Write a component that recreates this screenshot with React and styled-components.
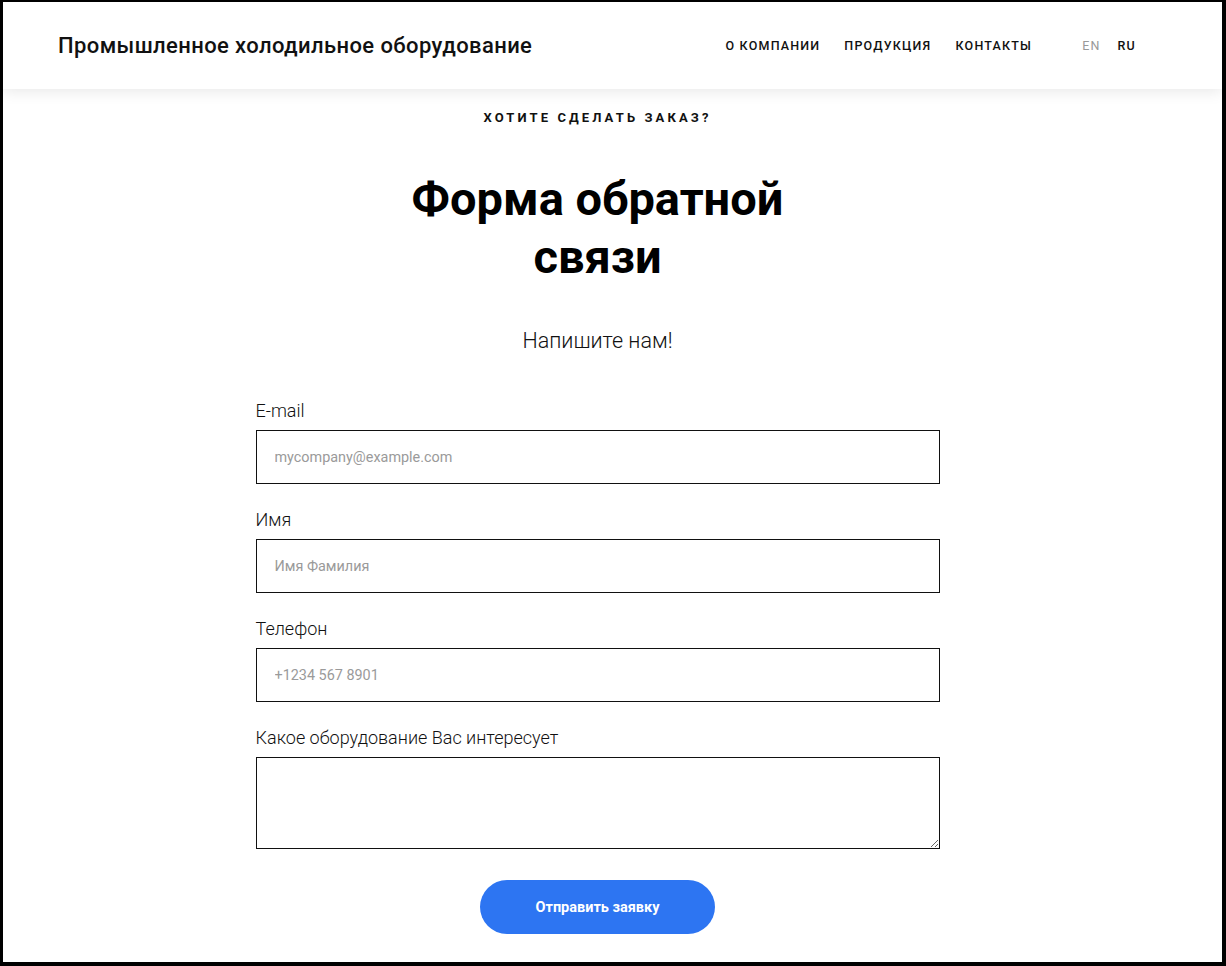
import React from "react";
import styled, { createGlobalStyle } from "styled-components";

const GlobalStyle = createGlobalStyle`
  * {
    box-sizing: border-box;
  }
  html, body {
    margin: 0;
    padding: 0;
    background: #fff;
  }
  body {
    font-family: Roboto, "Noto Sans", "Liberation Sans", sans-serif;
    color: #000;
  }
`;

const Frame = styled.div`
  width: 1226px;
  height: 966px;
  border-style: solid;
  border-color: #000;
  border-width: 2px 4px 4px 3px;
  overflow: hidden;
  background: #fff;
`;

const Header = styled.header`
  height: 87px;
  display: flex;
  align-items: center;
  justify-content: space-between;
  padding: 0 86px 0 55px;
  background: #fff;
  box-shadow: 0 3px 14px rgba(0, 0, 0, 0.09);
  position: relative;
  z-index: 1;
`;

const Brand = styled.div`
  font-size: 22px;
  font-weight: 500;
  color: #111;
  letter-spacing: 0.4px;
`;

const NavRow = styled.div`
  display: flex;
  align-items: center;
`;

const Nav = styled.nav`
  display: flex;
  gap: 24px;
  margin-right: 50px;
`;

const NavLink = styled.a`
  font-size: 12.5px;
  font-weight: 500;
  letter-spacing: 1.2px;
  text-transform: uppercase;
  color: #111;
  text-decoration: none;
`;

const Langs = styled.div`
  display: flex;
  gap: 17px;
`;

const Lang = styled.span`
  font-size: 12.5px;
  font-weight: ${(p) => (p.$active ? 500 : 400)};
  letter-spacing: 1.2px;
  color: ${(p) => (p.$active ? "#111" : "#999")};
`;

const Main = styled.main`
  display: flex;
  flex-direction: column;
  align-items: center;
  padding: 21px 30px 0 0;
`;

const Kicker = styled.div`
  font-size: 13px;
  line-height: 16px;
  font-weight: 700;
  letter-spacing: 3.1px;
  text-transform: uppercase;
  color: #111;
`;

const Title = styled.h1`
  margin: 44px 0 0;
  max-width: 420px;
  text-align: center;
  font-size: 47px;
  line-height: 57.5px;
  font-weight: 700;
  color: #000;
`;

const Subtitle = styled.p`
  margin: 44px 0 0;
  font-size: 21.5px;
  line-height: 24px;
  font-weight: 300;
  color: #111;
`;

const Form = styled.form`
  width: 684px;
  margin-top: 47px;
  display: flex;
  flex-direction: column;
`;

const Field = styled.div`
  display: flex;
  flex-direction: column;
  margin-bottom: 25px;
`;

const Label = styled.label`
  font-size: 18px;
  line-height: 21px;
  font-weight: 300;
  color: #111;
  margin-bottom: 9px;
`;

const Input = styled.input`
  width: 100%;
  height: 54px;
  border: 1px solid #111;
  border-radius: 0;
  padding: 0 18px;
  font-family: inherit;
  font-size: 14.4px;
  color: #111;
  outline: none;
  &::placeholder {
    color: #9a9a9a;
  }
`;

const TextArea = styled.textarea`
  width: 100%;
  height: 92px;
  border: 1px solid #111;
  border-radius: 0;
  padding: 14px 18px;
  font-family: inherit;
  font-size: 14px;
  outline: none;
`;

const Submit = styled.button`
  align-self: center;
  width: 235px;
  height: 54px;
  margin-top: 6px;
  border: none;
  border-radius: 27px;
  background: #2d75f2;
  color: #fff;
  font-family: inherit;
  font-size: 14.5px;
  font-weight: 700;
  cursor: pointer;
`;

const fields = [
  { id: "email", label: "E-mail", placeholder: "mycompany@example.com" },
  { id: "name", label: "Имя", placeholder: "Имя Фамилия" },
  { id: "phone", label: "Телефон", placeholder: "+1234 567 8901" },
];

export default function App() {
  return (
    <Frame>
      <GlobalStyle />
      <Header>
        <Brand>Промышленное холодильное оборудование</Brand>
        <NavRow>
          <Nav>
            <NavLink href="#">О компании</NavLink>
            <NavLink href="#">Продукция</NavLink>
            <NavLink href="#">Контакты</NavLink>
          </Nav>
          <Langs>
            <Lang>EN</Lang>
            <Lang $active>RU</Lang>
          </Langs>
        </NavRow>
      </Header>
      <Main>
        <Kicker>Хотите сделать заказ?</Kicker>
        <Title>Форма обратной связи</Title>
        <Subtitle>Напишите нам!</Subtitle>
        <Form onSubmit={(e) => e.preventDefault()}>
          {fields.map((f) => (
            <Field key={f.id}>
              <Label htmlFor={f.id}>{f.label}</Label>
              <Input id={f.id} placeholder={f.placeholder} />
            </Field>
          ))}
          <Field>
            <Label htmlFor="equipment">Какое оборудование Вас интересует</Label>
            <TextArea id="equipment" />
          </Field>
          <Submit type="submit">Отправить заявку</Submit>
        </Form>
      </Main>
    </Frame>
  );
}
